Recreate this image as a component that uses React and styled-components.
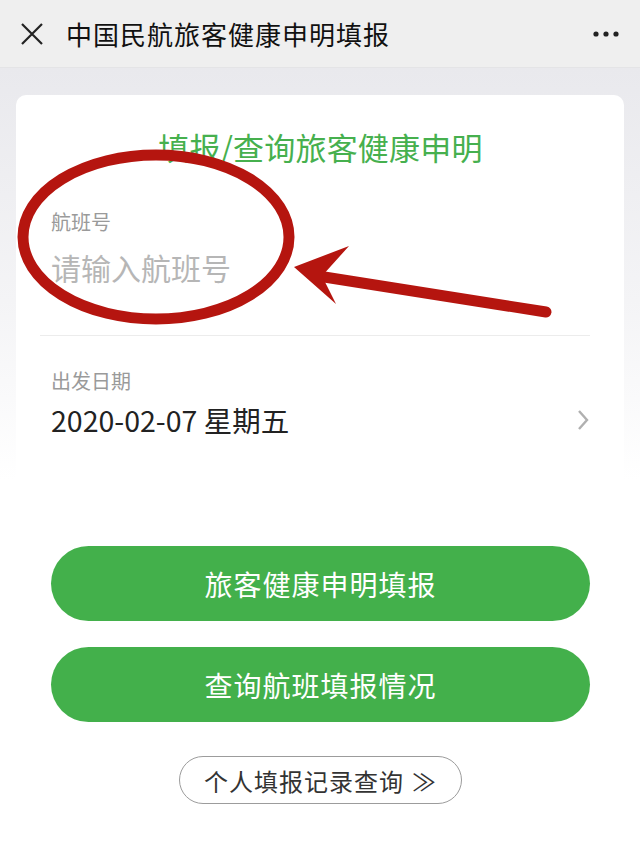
import React from 'react';
import styled, { createGlobalStyle } from 'styled-components';

const GlobalStyle = createGlobalStyle`
  body {
    margin: 0;
    font-family: "Noto Sans CJK SC", "Noto Sans", sans-serif;
  }
`;

const Page = styled.div`
  position: relative;
  width: 640px;
  min-height: 862px;
  overflow: hidden;
  background: linear-gradient(#e9e9ed 68px, #f4f4f6 300px, #ffffff 480px);
`;

const NavBar = styled.div`
  height: 68px;
  display: flex;
  align-items: center;
  padding: 0 20px;
  background: #efefef;
  border-bottom: 1px solid #e4e4e6;
  box-sizing: border-box;
`;

const NavTitle = styled.div`
  flex: 1;
  margin-left: 22px;
  font-size: 26px;
  font-weight: 400;
  color: #111;
  letter-spacing: 1px;
`;

const Content = styled.div`
  padding: 27px 16px 0;
`;

const Card = styled.div`
  background: #fff;
  border-radius: 10px 10px 0 0;
  padding: 32px 34px 56px 35px;
  display: flex;
  flex-direction: column;
`;

const Title = styled.div`
  text-align: center;
  color: #46b04e;
  font-size: 31px;
  line-height: 40px;
  letter-spacing: 0.2px;
`;

const Field = styled.div`
  display: flex;
  flex-direction: column;
  padding-top: ${(p) => p.top}px;
`;

const Label = styled.div`
  font-size: 20px;
  line-height: 26px;
  color: #9a9a9a;
`;

const FlightInput = styled.input`
  border: none;
  outline: none;
  padding: 0;
  margin-top: 14px;
  font-family: inherit;
  font-size: 30px;
  line-height: 36px;
  height: 36px;
  color: #222;
  background: transparent;
  &::placeholder {
    color: #b6b6b6;
  }
`;

const Divider = styled.div`
  height: 1px;
  background: #ececec;
  margin: 50px 0 0 -11px;
`;

const DateRow = styled.div`
  display: flex;
  align-items: center;
  justify-content: space-between;
  margin-top: 8px;
`;

const DateText = styled.div`
  font-size: 28.5px;
  line-height: 36px;
  color: #222;
`;

const Buttons = styled.div`
  display: flex;
  flex-direction: column;
  gap: 26px;
  margin-top: 108px;
`;

const GreenButton = styled.button`
  height: 75px;
  border: none;
  border-radius: 38px;
  background: #43b04b;
  color: #fff;
  font-family: inherit;
  font-size: 28px;
  letter-spacing: 1px;
  cursor: pointer;
`;

const PillButton = styled.button`
  align-self: center;
  margin-top: 34px;
  height: 48px;
  padding: 0 24px;
  border: 1.5px solid #9c9c9c;
  border-radius: 24px;
  background: #fff;
  color: #333;
  font-family: inherit;
  font-size: 24px;
  letter-spacing: 1px;
  display: flex;
  align-items: center;
  gap: 8px;
`;

const Annotation = styled.svg`
  position: absolute;
  left: 0;
  top: 0;
  pointer-events: none;
`;

const CloseIcon = () => (
  <svg width="24" height="24" viewBox="0 0 24 24">
    <path d="M2 2 L22 22 M22 2 L2 22" stroke="#222" strokeWidth="2.2" fill="none" />
  </svg>
);

const MoreIcon = () => (
  <svg width="28" height="8" viewBox="0 0 28 8">
    <circle cx="4" cy="4" r="2.6" fill="#222" />
    <circle cx="14" cy="4" r="2.6" fill="#222" />
    <circle cx="24" cy="4" r="2.6" fill="#222" />
  </svg>
);

const Chevron = () => (
  <svg width="14" height="22" viewBox="0 0 14 22">
    <polyline points="3,2 11,11 3,20" stroke="#b0b0b0" strokeWidth="2.4" fill="none" />
  </svg>
);

const App = () => (
  <Page>
    <GlobalStyle />
    <NavBar>
      <CloseIcon />
      <NavTitle>中国民航旅客健康申明填报</NavTitle>
      <MoreIcon />
    </NavBar>
    <Content>
      <Card>
        <Title>填报/查询旅客健康申明</Title>
        <Field top={42}>
          <Label>航班号</Label>
          <FlightInput placeholder="请输入航班号" />
        </Field>
        <Divider />
        <Field top={32}>
          <Label>出发日期</Label>
          <DateRow>
            <DateText>2020-02-07 星期五</DateText>
            <Chevron />
          </DateRow>
        </Field>
        <Buttons>
          <GreenButton>旅客健康申明填报</GreenButton>
          <GreenButton>查询航班填报情况</GreenButton>
        </Buttons>
        <PillButton>
          个人填报记录查询 <span>≫</span>
        </PillButton>
      </Card>
    </Content>
    <Annotation width="640" height="862" viewBox="0 0 640 862">
      <ellipse cx="156" cy="237" rx="133" ry="82" stroke="#b5150f" strokeWidth="11" fill="none" />
      <line x1="318" y1="276" x2="546" y2="312" stroke="#b5150f" strokeWidth="11" strokeLinecap="round" />
      <polygon points="294,267 349,246 322,276 336,304" fill="#b5150f" />
    </Annotation>
  </Page>
);

export default App;
